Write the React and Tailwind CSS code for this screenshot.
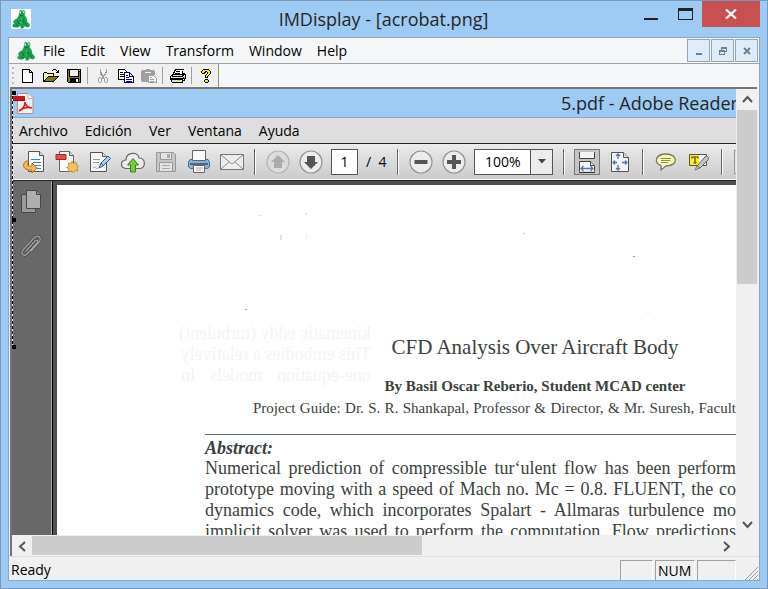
import React from "react";

const uiFont = "font-['Open_Sans','Noto_Sans',sans-serif]";
const serifFont = "font-['Liberation_Serif',serif]";

function Frog({ className }) {
  return (
    <svg viewBox="0 0 20 20" className={className} aria-hidden="true">
      <path d="M8.500 1.500 10 1l1.500 1L13 1l1.500 2-1 3 2 3 1 4 2 2 .5 2-2 1.500-2-.5-1-1-2 2.500h-2L9 16.500 7 18.500H3L1 16.500l2-2-1-2 2-2 2-1 1.500-2.500Z" fill="#18a04b" />
      <path d="M8.500 2.500h1.500v2H8.500ZM12 2.500h1.500v1.500H12Z" fill="#dff2e4" />
      <path d="M9 6.500h3M6 11l2 4M12 10l1 4M5 16l3 1M14 14l2 2" stroke="#0b7433" fill="none" />
      <path d="M10 9l1 2M9 13l2 1" stroke="#5cc683" fill="none" />
    </svg>
  );
}

function PdfIcon() {
  return (
    <svg width="21" height="21" viewBox="0 0 21 21" aria-hidden="true">
      <path d="M4.500.5H15l5 5v15H4.500Z" fill="#f5eeee" stroke="#b98b8b" />
      <path d="M15 .5v5h5" fill="#fff" stroke="#b7b7b7" />
      <path d="M0 3h12v5H0Z" fill="#c5161d" />
      <path d="M0 7h12v1H0Z" fill="#8d0c12" />
      <path d="M6 18c4-2 6-6 6-9 0 3 3 6 7 6-4-1-9 0-13 3Z" fill="none" stroke="#d01e25" strokeWidth="1.600" />
    </svg>
  );
}

const NewIcon = () => (
  <svg width="16" height="16" viewBox="0 0 16 16" shapeRendering="crispEdges" aria-hidden="true">
    <path d="M2 1h8v1h1v1h1v1h1v11H2Z" fill="#000" />
    <path d="M3 2h6v3h3v9H3Z" fill="#fff" />
    <path d="M10 3h1v1h-1Z" fill="#fff" />
  </svg>
);
const OpenIcon = () => (
  <svg width="16" height="16" viewBox="0 0 16 16" shapeRendering="crispEdges" aria-hidden="true">
    <path d="M0 5h1V4h3v1h7v3h5v1h-1v1h-1v1h-1v1h-1v1h-1v1H0Z" fill="#000" />
    <path d="M1 5h3v1h6v2H5v1H4v1H3v1H2v1H1Z" fill="#f7f7a0" />
    <path d="M5 9h9v1h-1v1h-1v1h-1v1H2v-1h1v-1h1v-1h1Z" fill="#808000" />
    <path d="M9 2h1V1h3v1h1v1h1V2h1v3h-3V4h1V3h-1V2h-3v1H9Z" fill="#000" />
  </svg>
);
const SaveIcon = () => (
  <svg width="16" height="16" viewBox="0 0 16 16" shapeRendering="crispEdges" aria-hidden="true">
    <path d="M1 1h14v14H2v-1H1Z" fill="#000" />
    <path d="M2 2h1v7h10V4h1v10H2Z" fill="#808000" />
    <path d="M4 2h8v6H4Z" fill="#efefef" />
    <path d="M13 2h1v1h-1Z" fill="#efefef" />
    <path d="M4 10h9v5H4Z" fill="#000" />
    <path d="M10 11h2v3h-2Z" fill="#efefef" />
  </svg>
);
const CutIcon = () => (
  <svg width="16" height="16" viewBox="0 0 16 16" shapeRendering="crispEdges" aria-hidden="true">
    <path d="M5 1h1v3h1v2h1v1h1V6h1V4h1V1h1v4h-1v2h-1v1h-1v2h1V9h2v1h1v4h-1v1h-2v-1H9v-3H8v-1h-.5v1H7v3H6v1H4v-1H3v-4h1V9h2v1h1V8H6V7H5Zm-1 9v4h2v-4Zm6 0v4h2v-4Z" fill="#a0a0a0" fillRule="evenodd" />
  </svg>
);
const CopyIcon = () => (
  <svg width="16" height="16" viewBox="0 0 16 16" shapeRendering="crispEdges" aria-hidden="true">
    <path d="M.5 1.500h6l3 3v7h-9Z" fill="#fff" stroke="#000" />
    <path d="M2 4h3v1H2zM2 6h4v1H2zM2 8h4v1H2z" fill="#000" />
    <path d="M6.500 4.500h5l4 4v6h-9Z" fill="#fff" stroke="#000080" />
    <path d="M11 5v4h4V8h-3V5ZM8 7h2v1H8zM8 9h3v1H8zM8 11h6v1H8zM8 13h6v1H8z" fill="#000080" />
  </svg>
);
const PasteIcon = () => (
  <svg width="16" height="16" viewBox="0 0 16 16" shapeRendering="crispEdges" aria-hidden="true">
    <path d="M1 2h4V1h4v1h4v1h1v4H7v7H1v-1H0V3h1Z" fill="#a0a0a0" />
    <path d="M4 4h6v1H4Z" fill="#efefef" />
    <path d="M7.500 7.500h5l2.500 2.500v4.500h-7.500Z" fill="#f4f4f4" stroke="#a0a0a0" />
    <path d="M9 9h2v1H9zM9 11h4v1H9zM9 13h4v1H9z" fill="#a0a0a0" />
  </svg>
);
const PrintIcon = () => (
  <svg width="16" height="16" viewBox="0 0 16 16" shapeRendering="crispEdges" aria-hidden="true">
    <path d="M5 1h9v1h-1v3h2v1h1v5h-1v2h-2v2H2v-1H1v-2H0V8h1V7h1V6h1V4h1V2h1Z" fill="#000" />
    <path d="M6 2h7v1h-1v3H4V5h1V3h1Z" fill="#fff" />
    <path d="M6 3h4v1H6zM5 5h5v1H5z" fill="#000" />
    <path d="M3 7h9v1H2v1h11v1H1V8h2ZM2 12h10v2H2ZM14 7h1v3h-1z" fill="#ddd" />
    <path d="M7 12h3v1H7Z" fill="#e0e000" />
    <path d="M13 8h1v1h-1zM13 11h1v1h-1z" fill="#fff" />
  </svg>
);
const HelpIcon = () => (
  <svg width="16" height="16" viewBox="0 0 16 16" shapeRendering="crispEdges" aria-hidden="true">
    <path d="M4 1h6v1h1v1h1v3h-1v1h-1v1H9v2H6V7h1V6h1V4H7v1H6v1H3V5H2V3h1V2h1ZM6 11h3v1h1v2H9v1H6v-1H5v-2h1Z" fill="#000" />
    <path d="M4 2h6v1h1v3h-1v1H9v1H8v1H7V7h1V6h1V4H8V3H6v1H5v1H3V3h1ZM6 12h3v2H6Z" fill="#f2e800" />
  </svg>
);

function ToolButton({ label, disabled, children }) {
  return (
    <button type="button" aria-label={label} disabled={disabled} className="flex h-full w-[23px] items-center justify-center">
      {children}
    </button>
  );
}
const ToolSeparator = () => (
  <span className="flex h-full w-1.5 py-[3px] pl-0.5">
    <span className="w-px bg-[#a0a0a0]" />
  </span>
);

const ExportIcon = () => (
  <svg width="24" height="24" viewBox="0 0 24 24" aria-hidden="true">
    <path d="M6.500 1.500h11l4 4v16h-15Z" fill="#fafafa" stroke="#555" />
    <path d="M17.500 1.500v4h4" fill="#ddd" stroke="#555" />
    <path d="M9 9.500h9M11 12.500h8M12 15.500h7M14 18.500h5" stroke="#3c7fc6" />
    <path d="M4 11c-5 4-2 10 6 9v3l5-5-5-5v3c-4 1-6-1-3-5Z" fill="#f4bd55" stroke="#a8711b" />
  </svg>
);
const CreateIcon = () => (
  <svg width="24" height="24" viewBox="0 0 24 24" aria-hidden="true">
    <path d="M4.500 1.500h10l4 4v16h-14Z" fill="#fafafa" stroke="#666" />
    <path d="M14.500 1.500v4h4" fill="#ddd" stroke="#555" />
    <path d="M1 4.500h10v5H1Z" fill="#ea4b50" stroke="#a4242a" />
    <path d="m17 11 1.500 2.500L21 12l.3 3 2.200 1-1.500 2 1 3-3-.4-1.500 2.400-2-2-3 1 .5-3-2.500-1.500L14 16l-.8-3 3 .6Z" fill="#f5c35c" stroke="#bf8426" strokeWidth=".8" />
  </svg>
);
const EditIcon = () => (
  <svg width="24" height="24" viewBox="0 0 24 24" aria-hidden="true">
    <path d="M2.500 2.500h12l4 4v15h-16Z" fill="#f6f6f6" stroke="#555" />
    <path d="M14.500 2.500v4h4" fill="#ddd" stroke="#555" />
    <path d="M5 9.500h7M5 12.500h6M5 18c2-3 3 2 5 0" stroke="#999" fill="none" />
    <path d="m11 18 2-5 7-7 2.500 2.500L15 16Z" fill="#a9cbe9" stroke="#335b82" />
    <path d="m13 13 2.500 3" stroke="#335b82" />
  </svg>
);
const CloudIcon = () => (
  <svg width="26" height="24" viewBox="0 0 26 24" aria-hidden="true">
    <path d="M6 18.500C-.5 18 .5 10 6 10c0-8 12-9 13-2 7 0 7 10 1 10.500Z" fill="#ececec" stroke="#666" strokeWidth="1.200" />
    <path d="m13 8.500 5.500 6.500h-3v7h-5v-7h-3Z" fill="#75cc3c" stroke="#36851b" />
  </svg>
);
const DiskIcon = () => (
  <svg width="24" height="24" viewBox="0 0 24 24" aria-hidden="true">
    <path d="M2.500 2.500h17l2 2v17h-19Z" fill="#c6c6c6" stroke="#999" />
    <path d="M6.500 2.500h11v7h-11ZM5.500 12.500h13v9h-13Z" fill="#e3e3e3" stroke="#999" />
    <path d="M13 4h3v4h-3ZM8 15h8v1H8zM8 18h8v1H8z" fill="#aaa" />
  </svg>
);
const PrinterIcon = () => (
  <svg width="24" height="24" viewBox="0 0 24 24" aria-hidden="true">
    <path d="M3 9.500h18l1.500 2.500v5l-2 1.500h-17L1.500 17v-5Z" fill="#86b1d3" stroke="#4b6c88" />
    <path d="M3 14h18" stroke="#38536b" strokeWidth="1.500" />
    <path d="M5.500.5h13v10h-13ZM6.500 15.500h11v7h-11Z" fill="#fafafa" stroke="#666" />
    <path d="M9 18h7M9 20h5" stroke="#aaa" />
  </svg>
);
const MailIcon = () => (
  <svg width="24" height="24" viewBox="0 0 24 24" aria-hidden="true">
    <path d="M.5 4.500h23v15H.5Z" fill="#ededed" stroke="#777" />
    <path d="m1 5 11 9L23 5M1 19l8-7M23 19l-8-7" fill="none" stroke="#8a8a8a" />
  </svg>
);

function RoundIcon({ children, faded }) {
  return (
    <svg width="24" height="24" viewBox="0 0 24 24" aria-hidden="true">
      <circle cx="12" cy="12" r="11" fill={faded ? "#dcdcdc" : "#ececec"} stroke={faded ? "#b5b5b5" : "#949494"} strokeWidth="1.200" />
      {children}
    </svg>
  );
}
const FitWidthIcon = () => (
  <svg width="18" height="22" viewBox="0 0 18 22" aria-hidden="true">
    <path d="M1.500 1v6.500h15V1" fill="#f4f4f4" stroke="#444" />
    <path d="M1.500 20.500v-10h11l4 4v6" fill="#f4f4f4" stroke="#444" />
    <path d="M12.500 10.500v4h4" fill="#ddd" stroke="#444" />
    <path d="M3 17.500h12M5.500 15 3 17.500 5.500 20M12.500 15l2.500 2.500-2.500 2.500" fill="none" stroke="#5577b5" strokeWidth="1.300" />
    <path d="M1 21.500h16" stroke="#333" />
  </svg>
);
const FitPageIcon = () => (
  <svg width="18" height="20" viewBox="0 0 18 20" aria-hidden="true">
    <path d="M.5.5h12l5 5v14H.5Z" fill="#f4f4f4" stroke="#555" />
    <path d="M12.500.5v5h5" fill="#ddd" stroke="#555" />
    <path d="M7 2v5M5 4l2-2 2 2M7 18v-5M5 16l2 2 2-2M2 10.500h4M4 8.500l-2 2 2 2M16 10.500h-5M14 8.500l2 2-2 2" fill="none" stroke="#5577b5" strokeWidth="1.300" />
  </svg>
);
const BubbleIcon = () => (
  <svg width="22" height="20" viewBox="0 0 22 20" aria-hidden="true">
    <path d="M11 2c12.500 0 12.500 12 0 12L6 18v-4.500C-1.500 11.500 0 2 11 2Z" fill="#fdf9a0" stroke="#777" strokeWidth="1.300" />
    <path d="M6 6.500h10M6 8.500h9M6 10.500h7" stroke="#888" />
  </svg>
);
const HighlightIcon = () => (
  <svg width="22" height="20" viewBox="0 0 22 20" aria-hidden="true">
    <path d="M1.500 2.500h17v11h-17Z" fill="#f5f5f5" stroke="#555" />
    <path d="M2 3h9v10H2Z" fill="#ffed22" />
    <path d="M4 6.500V5h6v1.500M7 5v6M5.500 11h3" stroke="#444" fill="none" strokeWidth="1.200" />
    <path d="m9 14 8-9c2-2 5 1 3 3l-8 8Z" fill="#c4c4c4" stroke="#666" />
    <path d="m9 14-2 4 5-2Z" fill="#e5dc25" stroke="#777" />
  </svg>
);

function ReaderButton({ label, disabled, children }) {
  return (
    <button type="button" aria-label={label} disabled={disabled} className="flex h-full w-[33px] shrink-0 items-center justify-center">
      {children}
    </button>
  );
}
const ReaderSeparator = () => (
  <span className="flex h-[26px] w-[13px] shrink-0 justify-center">
    <span className="w-0.5 border-r border-white bg-[#666]" />
  </span>
);

function Chevron({ d }) {
  return (
    <svg width="11" height="11" viewBox="0 0 11 11" aria-hidden="true">
      <path d={d} fill="none" stroke="#555" strokeWidth="2" />
    </svg>
  );
}

const bodyLines = [
  "Numerical prediction of compressible tur‘ulent flow has been perform",
  "prototype moving with a speed of Mach no. Mc = 0.8. FLUENT, the co",
  "dynamics code, which incorporates Spalart - Allmaras turbulence mo",
  "implicit solver was used to perform the computation. Flow predictions",
];

// Faint print from the reverse side of the scanned sheet.
const reverseLines = [
  "kinematic eddy (turbulent)",
  "This embodies a relatively",
  "one-equation models in",
];

function Titlebar() {
  return (
    <header className="flex h-9 shrink-0 items-start pl-2.5">
      <span className="mt-2 flex bg-white"><Frog className="size-5" /></span>
      <h1 className="flex-1 self-center pl-[102px] text-center text-[18px] leading-6 text-[#262626]">IMDisplay - [acrobat.png]</h1>
      <div className="flex h-[26px]">
        <button type="button" aria-label="Minimize" className="flex w-[34px] items-end justify-center pb-[7px]">
          <span className="h-0.5 w-3.5 bg-[#222]" />
        </button>
        <button type="button" aria-label="Maximize" className="flex w-[34px] items-center justify-center">
          <span className="h-3 w-[15px] border border-t-[3px] border-[#222]" />
        </button>
        <button type="button" aria-label="Close" className="mr-[7px] flex w-[58px] items-center justify-center bg-[#c75050]">
          <svg width="12" height="10" viewBox="0 0 12 10" aria-hidden="true"><path d="m1 .5 10 9M11 .5l-10 9" stroke="#fff" strokeWidth="2.200" /></svg>
        </button>
      </div>
    </header>
  );
}

function MdiButton({ label, children }) {
  return (
    <button type="button" aria-label={label} className="flex h-[23px] w-[23px] items-center justify-center border border-[#93a5ba] bg-[#deebf8]">
      {children}
    </button>
  );
}

function MenuBar() {
  return (
    <nav className="flex h-[26px] shrink-0 items-center border-b border-[#a0a0a0] bg-[#f5f6f7] pr-px pl-[7px]">
      <Frog className="size-5" />
      <div className="ml-[7px] flex flex-1 gap-[15px] text-sm text-black">
        {["File", "Edit", "View", "Transform", "Window", "Help"].map((m) => (
          <button type="button" key={m}>{m}</button>
        ))}
      </div>
      <div className="flex gap-px">
        <MdiButton label="Minimize document"><span className="mt-1.5 h-0.5 w-1.5 bg-[#6d7f92]" /></MdiButton>
        <MdiButton label="Restore document">
          <svg width="8" height="8" viewBox="0 0 8 8" shapeRendering="crispEdges" aria-hidden="true">
            <path d="M2 0h6v5H6V4h1V2H3v1H2ZM0 3h6v5H0Zm1 2v2h4V5Z" fill="#6d7f92" fillRule="evenodd" />
          </svg>
        </MdiButton>
        <MdiButton label="Close document">
          <svg width="8" height="8" viewBox="0 0 8 8" aria-hidden="true"><path d="m1 1 6 6M7 1 1 7" stroke="#6d7f92" strokeWidth="2" /></svg>
        </MdiButton>
      </div>
    </nav>
  );
}

function ToolBar() {
  return (
    <div className="flex h-[23px] shrink-0 bg-[#f5f6f7]">
      <div className="flex border-r border-[#8e8e8e] bg-[#f0f0f0]">
        <span className="flex w-[7px] flex-col items-center justify-center gap-[3px]">
          <span className="size-0.5 bg-[#bbb]" />
          <span className="size-0.5 bg-[#bbb]" />
          <span className="size-0.5 bg-[#bbb]" />
          <span className="size-0.5 bg-[#bbb]" />
        </span>
        <ToolButton label="New"><NewIcon /></ToolButton>
        <ToolButton label="Open"><OpenIcon /></ToolButton>
        <ToolButton label="Save"><SaveIcon /></ToolButton>
        <ToolSeparator />
        <ToolButton label="Cut" disabled><CutIcon /></ToolButton>
        <ToolButton label="Copy"><CopyIcon /></ToolButton>
        <ToolButton label="Paste" disabled><PasteIcon /></ToolButton>
        <ToolSeparator />
        <ToolButton label="Print"><PrintIcon /></ToolButton>
        <ToolSeparator />
        <ToolButton label="Help"><HelpIcon /></ToolButton>
      </div>
    </div>
  );
}

function ReaderToolbar() {
  return (
    <div className="flex h-9 shrink-0 items-center border-b border-white bg-linear-to-b from-[#ebebeb] to-[#cbcbcb] pl-[5px]">
      <ReaderButton label="Export"><ExportIcon /></ReaderButton>
      <ReaderButton label="Create PDF"><CreateIcon /></ReaderButton>
      <ReaderButton label="Edit"><EditIcon /></ReaderButton>
      <ReaderButton label="Upload"><CloudIcon /></ReaderButton>
      <ReaderButton label="Save file" disabled><DiskIcon /></ReaderButton>
      <ReaderButton label="Print file"><PrinterIcon /></ReaderButton>
      <ReaderButton label="Send by mail"><MailIcon /></ReaderButton>
      <ReaderSeparator />
      <ReaderButton label="Previous page" disabled>
        <RoundIcon faded><path d="m12 5 7 7h-3v6H8v-6H5Z" fill="#ababab" /></RoundIcon>
      </ReaderButton>
      <ReaderButton label="Next page">
        <RoundIcon><path d="m12 19 7-7h-3V6H8v6H5Z" fill="#555" /></RoundIcon>
      </ReaderButton>
      <input aria-label="Page" defaultValue="1" className="ml-1 h-[26px] w-[27px] shrink-0 border border-[#555] bg-white text-center text-sm text-black" />
      <span className="w-[33px] shrink-0 pl-2 text-sm whitespace-pre text-black">/  4</span>
      <ReaderSeparator />
      <ReaderButton label="Zoom out">
        <RoundIcon><path d="M5.500 10h13v4h-13Z" fill="#555" /></RoundIcon>
      </ReaderButton>
      <ReaderButton label="Zoom in">
        <RoundIcon><path d="M10 5h4v5h5v4h-5v5h-4v-5H5v-4h5Z" fill="#555" /></RoundIcon>
      </ReaderButton>
      <div className="mx-1 grid h-[26px] w-[79px] shrink-0 grid-cols-[1fr_22px] border border-[#555] bg-white">
        <select aria-label="Zoom" className="col-span-2 col-start-1 row-start-1 appearance-none pl-2.5 text-sm text-black">
          <option>100%</option>
        </select>
        <span className="pointer-events-none col-start-2 row-start-1 flex items-center justify-center border-l border-[#555] bg-[#ececec]">
          <svg width="8" height="5" viewBox="0 0 8 5" aria-hidden="true"><path d="M0 0h8L4 4.500Z" fill="#444" /></svg>
        </span>
      </div>
      <ReaderSeparator />
      <ReaderButton label="Fit width">
        <span className="flex size-[26px] items-center justify-center border border-[#777] bg-[#c4c4c4]"><FitWidthIcon /></span>
      </ReaderButton>
      <ReaderButton label="Fit page"><FitPageIcon /></ReaderButton>
      <ReaderSeparator />
      <ReaderButton label="Comment"><BubbleIcon /></ReaderButton>
      <ReaderButton label="Highlight"><HighlightIcon /></ReaderButton>
      <ReaderSeparator />
      <span className="ml-1.5 h-6 w-20 shrink-0 border border-[#999] bg-[#e4e4e4]" />
    </div>
  );
}

function Page() {
  return (
    <article className={`relative flex min-w-0 flex-1 flex-col overflow-hidden bg-[#fefefe] pt-[150px] pl-[148px] text-[#3a423c] ${serifFont}`}>
      <div aria-hidden="true" className="absolute top-[138px] left-[124px] w-[190px] -scale-x-100 text-lg leading-[21px] text-[#f2f4f7]">
        {reverseLines.map((l) => (
          <p key={l} className="whitespace-nowrap [text-align-last:justify]">{l}</p>
        ))}
      </div>
      <svg aria-hidden="true" className="absolute top-0 left-0" width="640" height="150" viewBox="0 0 640 150">
        <path d="M202 30h3v1h-3z" fill="#eeddcb" />
        <path d="M249 28h1v2h-1zM466 48h2v1h-2z" fill="#ccc" />
        <path d="M223 50h2v5h-2z" fill="#e4e0db" />
        <path d="M576 71h2v1h-2zM188 124h2v1h-2z" fill="#999" />
        <path d="M249 50h1v4h-1zM590 127h2v1h-2z" fill="#ece8e4" />
      </svg>
      <div className="relative">
        <h2 className="w-[660px] text-center text-[21px] leading-6">CFD Analysis Over Aircraft Body</h2>
        <p className="mt-4 w-[660px] text-center text-[15px] leading-[22px] font-bold">By Basil Oscar Reberio, Student MCAD center</p>
        <p className="pl-12 text-[15px] leading-[22px] whitespace-nowrap [text-align-last:justify]">Project Guide: Dr. S. R. Shankapal, Professor &amp; Director, &amp; Mr. Suresh, Facult</p>
        <hr className="mt-[15px] border-t border-[#5c7266]" />
        <h3 className="mt-[3px] text-lg leading-5 font-bold italic">Abstract:</h3>
      </div>
      <div className="relative text-lg leading-[21px]">
        {bodyLines.map((l) => (
          <p key={l} className="whitespace-nowrap [text-align-last:justify]">{l}</p>
        ))}
      </div>
    </article>
  );
}

function ScannedWindow() {
  return (
    <div className="relative flex min-h-0 min-w-0 flex-col overflow-hidden bg-[#9dcbf3]">
      <div className="flex h-[29px] shrink-0 items-center justify-between border-b border-[#8ba6c4] pl-px">
        <PdfIcon />
        <span className="w-[175px] overflow-hidden text-[18px] leading-6 whitespace-nowrap text-[#262626]">5.pdf - Adobe Reader</span>
      </div>
      <div className="flex h-[26px] shrink-0 items-center gap-[17px] border-b border-[#222] bg-[#dedede] pl-[7px] text-sm text-black">
        {["Archivo", "Edición", "Ver", "Ventana", "Ayuda"].map((m) => (
          <button type="button" key={m}>{m}</button>
        ))}
      </div>
      <ReaderToolbar />
      <div className="flex min-h-0 flex-1 border-t border-[#222] bg-[#505050]">
        <aside className="flex w-10 shrink-0 flex-col items-center gap-5 border-r border-[#aaa] bg-[#686868] pt-[9px] pr-0.5">
          <button type="button" aria-label="Page thumbnails">
            <svg width="22" height="24" viewBox="0 0 22 24" aria-hidden="true">
              <path d="M1.500 4.500h14v18h-14Z" fill="#9a9a9a" stroke="#484848" />
              <path d="M6.500.5h10l4 4v14h-14Z" fill="#aeaeae" stroke="#484848" />
              <path d="M16.500.5v4h4" fill="#888" stroke="#484848" />
            </svg>
          </button>
          <button type="button" aria-label="Attachments">
            <svg width="22" height="24" viewBox="0 0 22 24" aria-hidden="true">
              <path d="m6 17 9-10c2-2 4 0 2 2L7 20c-3 3-7 0-4-4L14 4c4-4 8 0 5 4l-8 9" fill="none" stroke="#484848" strokeWidth="2.600" />
              <path d="m6 17 9-10c2-2 4 0 2 2L7 20c-3 3-7 0-4-4L14 4c4-4 8 0 5 4l-8 9" fill="none" stroke="#a5a5a5" strokeWidth="1.200" />
            </svg>
          </button>
        </aside>
        <div className="flex min-w-0 flex-1 border-l border-black pt-1 pl-1">
          <Page />
        </div>
      </div>
      <div className="absolute top-0.5 left-0 flex h-[258px] w-1 flex-col justify-between">
        <span className="absolute inset-y-0 left-0 border-l border-dashed border-black bg-white" />
        <span className="relative size-1 bg-black" />
        <span className="relative size-1 bg-black" />
        <span className="relative size-1 bg-black" />
      </div>
    </div>
  );
}

export default function App() {
  return (
    <div className={`flex h-screen flex-col border border-[#7b99b8] bg-[#9dcbf3] ${uiFont}`}>
      <Titlebar />
      <main className="mx-[7px] mb-[7px] flex min-h-0 flex-1 flex-col border border-[#86a8cb] bg-[#f0f0f0]">
        <MenuBar />
        <ToolBar />
        <div className="mr-0.5 ml-px grid min-h-0 flex-1 grid-cols-[minmax(0,1fr)_21px] grid-rows-[minmax(0,1fr)_21px] border-t-2 border-l-2 border-[#757575]">
          <ScannedWindow />
          <div className="flex flex-col bg-[#f0f0f0] pl-px">
            <button type="button" aria-label="Scroll up" className="flex h-[21px] items-center justify-center"><Chevron d="m1 8 4.500-5L10 8" /></button>
            <div className="min-h-0 flex-1"><div className="h-[43%] bg-[#cdcdcd]" /></div>
            <button type="button" aria-label="Scroll down" className="flex h-[21px] items-center justify-center"><Chevron d="m1 3 4.500 5L10 3" /></button>
          </div>
          <div className="flex bg-[#f0f0f0] pt-px">
            <button type="button" aria-label="Scroll left" className="flex w-5 items-center justify-center"><Chevron d="M8 1 3 5.500 8 10" /></button>
            <div className="min-w-0 flex-1"><div className="h-[19px] w-[57%] bg-[#cdcdcd]" /></div>
            <button type="button" aria-label="Scroll right" className="flex w-5 items-center justify-center"><Chevron d="m3 1 5 4.500L3 10" /></button>
          </div>
        </div>
        <footer className="flex h-6 shrink-0 items-center border-t border-[#e0e0e0] pl-0.5 text-sm text-black">
          <span className="flex-1 pt-0.5">Ready</span>
          <div className="flex h-5 gap-0.5 self-end leading-5">
            <span className="w-[33px] border-t border-r border-l border-[#a0a0a0] border-r-white" />
            <span className="w-10 border-t border-r border-l border-[#a0a0a0] border-r-white pl-0.5">NUM</span>
            <span className="w-[39px] border-t border-r border-l border-[#a0a0a0] border-r-white" />
          </div>
          <svg width="23" height="14" viewBox="0 0 23 14" className="self-end" aria-hidden="true">
            <path d="M9 14 22 1M13 14l9-9M17 14l5-5M21 14l1-1" stroke="#999" fill="none" />
          </svg>
        </footer>
      </main>
    </div>
  );
}
